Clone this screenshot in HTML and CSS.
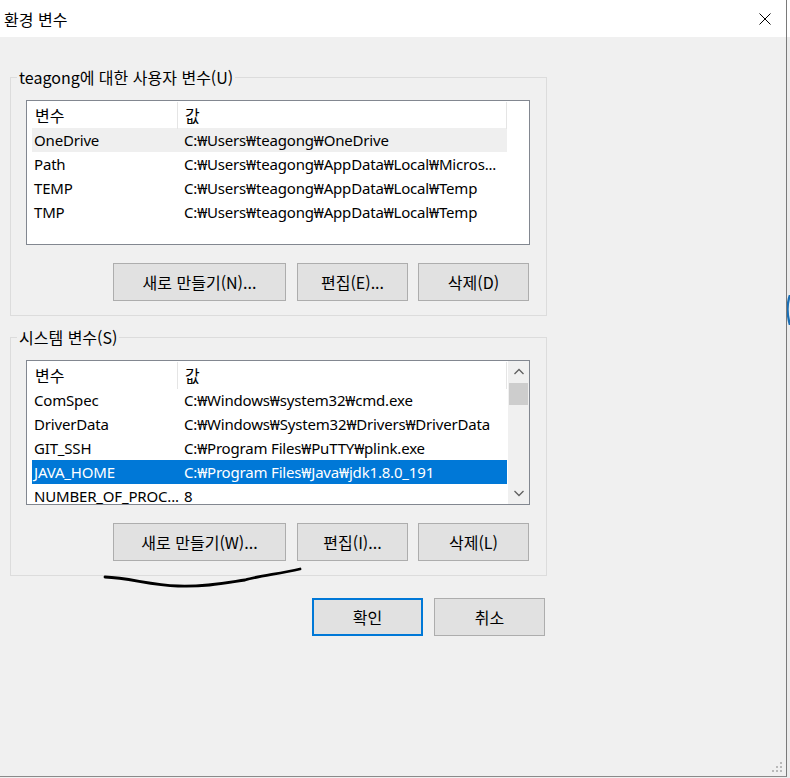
FILE: index.html
```html
<!DOCTYPE html>
<html lang="ko">
<head>
<meta charset="utf-8">
<title>환경 변수</title>
<link rel="stylesheet" href="styles.css">
</head>
<body>
<div class="screen">
  <div class="window">
    <div class="titlebar">
      <span class="title">환경 변수</span>
      <svg class="close" width="12" height="12" viewBox="0 0 12 12"><path d="M0.5 0.5L11.5 11.5M11.5 0.5L0.5 11.5" stroke="#000" stroke-width="1" fill="none"/></svg>
    </div>
    <div class="content">
      <fieldset class="group">
        <legend>teagong에 대한 사용자 변수(U)</legend>
        <div class="list">
          <div class="lmain">
            <div class="lhead"><span class="hc1">변수</span><span class="hc2">값</span></div>
            <div class="row hover"><span class="c1">OneDrive</span><span class="c2">C:₩Users₩teagong₩OneDrive</span></div>
            <div class="row"><span class="c1">Path</span><span class="c2">C:₩Users₩teagong₩AppData₩Local₩Micros...</span></div>
            <div class="row"><span class="c1">TEMP</span><span class="c2">C:₩Users₩teagong₩AppData₩Local₩Temp</span></div>
            <div class="row"><span class="c1">TMP</span><span class="c2">C:₩Users₩teagong₩AppData₩Local₩Temp</span></div>
          </div>
          <div class="lspace"></div>
        </div>
        <div class="btns">
          <button class="btn wide">새로 만들기(N)...</button>
          <button class="btn mid">편집(E)...</button>
          <button class="btn">삭제(D)</button>
        </div>
      </fieldset>
      <fieldset class="group">
        <legend>시스템 변수(S)</legend>
        <div class="list">
          <div class="lmain">
            <div class="lhead"><span class="hc1">변수</span><span class="hc2">값</span></div>
            <div class="row"><span class="c1">ComSpec</span><span class="c2">C:₩Windows₩system32₩cmd.exe</span></div>
            <div class="row"><span class="c1">DriverData</span><span class="c2">C:₩Windows₩System32₩Drivers₩DriverData</span></div>
            <div class="row"><span class="c1">GIT_SSH</span><span class="c2">C:₩Program Files₩PuTTY₩plink.exe</span></div>
            <div class="row selected"><span class="c1">JAVA_HOME</span><span class="c2">C:₩Program Files₩Java₩jdk1.8.0_191</span></div>
            <div class="row"><span class="c1">NUMBER_OF_PROC...</span><span class="c2">8</span></div>
          </div>
          <div class="scrollbar">
            <div class="sarrow"><svg width="10" height="7" viewBox="0 0 10 7"><path d="M0.5 6L5 1.5L9.5 6" stroke="#606060" stroke-width="1.3" fill="none"/></svg></div>
            <div class="sthumb"></div>
            <div class="strack"></div>
            <div class="sarrow"><svg width="10" height="7" viewBox="0 0 10 7"><path d="M0.5 1L5 5.5L9.5 1" stroke="#606060" stroke-width="1.3" fill="none"/></svg></div>
          </div>
        </div>
        <div class="btns">
          <button class="btn wide">새로 만들기(W)...</button>
          <button class="btn mid">편집(I)...</button>
          <button class="btn">삭제(L)</button>
        </div>
      </fieldset>
      <div class="actions">
        <button class="btn default">확인</button>
        <button class="btn">취소</button>
      </div>
    </div>
    <svg class="scribble" width="200" height="24" viewBox="103 566 200 24"><path d="M105 577 C 130 578, 150 585, 178 586 S 225 583, 245 580 C 258 576, 278 574, 300 569" stroke="#000" stroke-width="2.8" fill="none" stroke-linecap="round"/></svg>
    <svg class="grip" width="10" height="10" viewBox="0 0 10 10"><g fill="#b9b9b9"><rect x="8" y="0" width="2" height="2"/><rect x="4" y="4" width="2" height="2"/><rect x="8" y="4" width="2" height="2"/><rect x="0" y="8" width="2" height="2"/><rect x="4" y="8" width="2" height="2"/><rect x="8" y="8" width="2" height="2"/></g></svg>
  </div>
  <div class="outside">
    <div class="outside-top"></div>
    <svg class="arc" width="3" height="30" viewBox="0 0 3 30"><path d="M3 0 C 0 8, 0 20, 3 30" stroke="#1a6fb5" stroke-width="2.4" fill="none"/></svg>
  </div>
</div>
</body>
</html>
```
FILE: styles.css
```css
* { box-sizing: border-box; }
html, body { margin: 0; padding: 0; }
body {
  background: #f0f0f0;
  font-family: "Noto Sans CJK KR", sans-serif;
  font-size: 16px;
  color: #000;
}
.screen { display: flex; width: 790px; height: 778px; overflow: hidden; }
.window {
  position: relative;
  flex: none;
  width: 787px;
  height: 777px;
  background: #f0f0f0;
  border-right: 1px solid #7a7a7a;
  border-bottom: 1px solid #8a8a8a;
}
.titlebar {
  height: 37px;
  background: #fff;
  display: flex;
  align-items: center;
  justify-content: space-between;
  padding: 1px 15px 0 4px;
}
.title { font-size: 16px; }
.close { display: block; }
.content { padding: 30px 0 0 10px; }
.group {
  width: 537px;
  margin: 0;
  min-width: 0;
  border: 1px solid #dcdcdc;
  padding: 13px 16px 14px 15px;
}
.group + .group { margin-top: 11px; }
.group legend {
  padding: 0 2px;
  margin-left: -9px;
  line-height: 20px;
  font-size: 16px;
}
.list {
  height: 145px;
  border: 1px solid #828790;
  background: #fff;
  display: flex;
  overflow: hidden;
}
.lmain { width: 480px; flex: none; }
.lspace { flex: 1; }
.lhead {
  display: grid;
  grid-template-columns: 151px 329px;
  height: 27px;
  line-height: 27px;
  padding-top: 1px;
}
.hc1 { padding-left: 8px; border-right: 1px solid #e5e5e5; }
.hc2 { padding-left: 7px; border-right: 1px solid #e5e5e5; }
.row {
  display: grid;
  grid-template-columns: 145px 330px;
  margin-left: 5px;
  height: 24px;
  line-height: 24px;
  white-space: nowrap;
  font-family: "Noto Sans", "Noto Sans CJK KR", sans-serif;
  font-size: 15px;
  letter-spacing: -0.18px;
}
.c1 { padding-left: 2px; }
.c2 { padding-left: 7px; overflow: hidden; }
.row.hover { background: #efefef; }
.row.selected { background: #0078d7; color: #fff; }
.scrollbar {
  width: 21px;
  margin-left: 1px;
  background: #f0f0f0;
  display: flex;
  flex-direction: column;
}
.sarrow {
  height: 21px;
  flex: none;
  display: flex;
  align-items: center;
  justify-content: center;
}
.sthumb { height: 22px; margin: 1px 1px 0; background: #cdcdcd; flex: none; }
.strack { flex: 1; }
.btns {
  display: flex;
  justify-content: flex-end;
  margin-top: 18px;
  padding-right: 1px;
}
.btn {
  height: 38px;
  width: 111px;
  border: 1px solid #adadad;
  background: #e1e1e1;
  font-family: inherit;
  font-size: 16px;
  color: #000;
  padding: 0;
  margin: 0;
  display: flex;
  align-items: center;
  justify-content: center;
}
.btn.wide { width: 173px; margin-right: 11px; }
.btn.mid { margin-right: 10px; }
.btn.default { border: 2px solid #0078d7; }
.actions {
  width: 537px;
  display: flex;
  justify-content: flex-end;
  gap: 11px;
  margin-top: 22px;
  padding-right: 2px;
}
.scribble { position: absolute; left: 103px; top: 566px; }
.grip { position: absolute; left: 772px; top: 762px; }
.outside { flex: 1; display: flex; flex-direction: column; background: #ececec; }
.outside-top { height: 37px; background: #fff; }
.arc { margin-top: 258px; display: block; }
```
